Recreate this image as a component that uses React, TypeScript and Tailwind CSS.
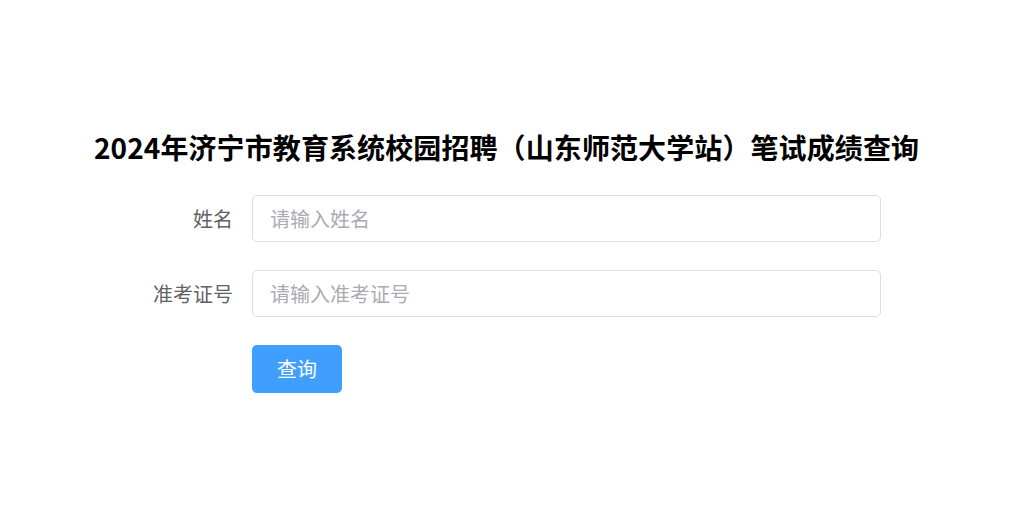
export default function App() {
  return (
    <div
      className="min-h-screen bg-white pt-[127px]"
      style={{ fontFamily: '"Microsoft YaHei", "Noto Sans CJK SC", sans-serif' }}
    >
      <h1 className="text-center text-[28px] font-bold leading-[40px] tracking-[0.1px] text-black">
        2024年济宁市教育系统校园招聘（山东师范大学站）笔试成绩查询
      </h1>

      <form className="mx-auto mt-[28px] flex w-[749px] flex-col gap-[28px]">
        <div className="flex items-center">
          <label className="w-[120px] shrink-0 pr-[19px] text-right text-[20px] text-[#606266]">
            姓名
          </label>
          <input
            type="text"
            placeholder="请输入姓名"
            className="h-[47px] flex-1 rounded-[5px] border border-[#dcdfe6] px-[17px] text-[20px] text-[#606266] outline-none placeholder:text-[#a8abb2]"
          />
        </div>

        <div className="flex items-center">
          <label className="w-[120px] shrink-0 pr-[19px] text-right text-[20px] text-[#606266]">
            准考证号
          </label>
          <input
            type="text"
            placeholder="请输入准考证号"
            className="h-[47px] flex-1 rounded-[5px] border border-[#dcdfe6] px-[17px] text-[20px] text-[#606266] outline-none placeholder:text-[#a8abb2]"
          />
        </div>

        <div className="flex pl-[120px]">
          <button
            type="button"
            className="h-[48px] w-[90px] rounded-[5px] bg-[#409eff] text-[20px] text-white"
          >
            查询
          </button>
        </div>
      </form>
    </div>
  );
}
